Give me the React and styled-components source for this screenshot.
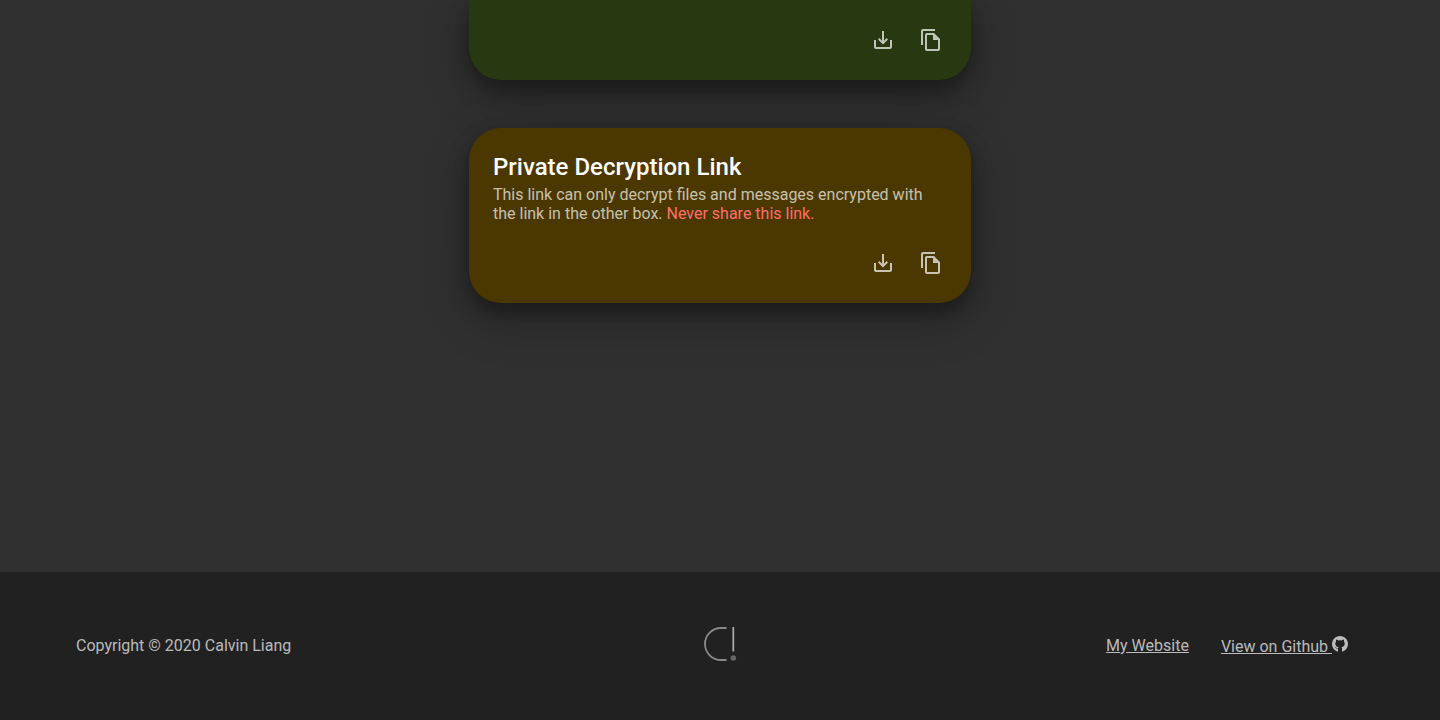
import React from "react";
import styled, { createGlobalStyle } from "styled-components";

const Global = createGlobalStyle`
  * { box-sizing: border-box; }
  body {
    margin: 0;
    background: #303030;
    color: rgba(255, 255, 255, 0.7);
    font-family: Roboto, sans-serif;
    font-size: 16px;
    line-height: 19px;
  }
`;

const Page = styled.div`
  display: flex;
  flex-direction: column;
  min-height: 100vh;
`;

const Main = styled.main`
  flex: 1;
  display: flex;
  flex-direction: column;
  align-items: center;
  gap: 48px;
  padding-bottom: 64px;
`;

const Card = styled.section`
  width: 100%;
  max-width: 502px;
  padding: 24px;
  border-radius: ${(p) => (p.$continued ? "0 0 32px 32px" : "32px")};
  background: ${(p) => p.$color};
  box-shadow: 0 10px 20px rgba(0, 0, 0, 0.36), 0 14px 50px 4px rgba(0, 0, 0, 0.18);
`;

const CardTitle = styled.h2`
  margin: 0 0 2px;
  color: #fff;
  font-size: 24px;
  font-weight: 500;
  line-height: 31px;
`;

const CardText = styled.p`
  margin: 0 0 24px;
`;

const Warning = styled.span`
  color: #ff6e6e;
`;

const Actions = styled.div`
  display: flex;
  justify-content: flex-end;
  gap: 16px;
`;

const IconButton = styled.button`
  display: flex;
  padding: 4px;
  border: 0;
  background: none;
  color: rgba(255, 255, 255, 0.7);
  cursor: pointer;
`;

const Footer = styled.footer`
  display: grid;
  grid-template-columns: 1fr auto 1fr;
  align-items: center;
  padding: 54px 76px 58px;
  background: #212121;
`;

const Copyright = styled.span`
  padding-top: 2px;
`;

const FooterLinks = styled.nav`
  display: flex;
  justify-content: flex-end;
  gap: 32px;
  padding: 4px 16px 0 0;
`;

const FooterLink = styled.a`
  color: inherit;
`;

const Logo = styled.svg`
  display: block;
`;

const DownloadIcon = () => (
  <svg width="24" height="24" viewBox="0 0 24 24" fill="currentColor" aria-hidden="true">
    <path d="M19 12v7H5v-7H3v7c0 1.100.9 2 2 2h14c1.100 0 2-.9 2-2v-7h-2zm-6 .67l2.590-2.580L17 11.500l-5 5-5-5 1.410-1.410L11 12.670V3h2v9.670z" />
  </svg>
);

const CopyIcon = () => (
  <svg width="24" height="24" viewBox="0 0 24 24" fill="currentColor" aria-hidden="true">
    <path d="M16 1H4c-1.100 0-2 .9-2 2v14h2V3h12V1zm-1 4H8c-1.100 0-1.990.9-1.990 2L6 21c0 1.100.89 2 1.990 2H19c1.100 0 2-.9 2-2V11l-6-6zM8 21V7h6v5h5v9H8z" />
  </svg>
);

const GithubIcon = () => (
  <svg width="16" height="16" viewBox="0 0 16 16" fill="currentColor" aria-hidden="true">
    <path d="M8 0a8 8 0 0 0-2.900 15.450c.5.190.9.050.9-.450v-2.200C4.900 13 4.300 12.800 3.900 12.100c-.3-.5-.6-.8-.9-1 .6-.1 1 .200 1.400.7.400.5.9.6 1.700.4.100-.4.300-.7.500-.9-2.200-.3-3.300-1.400-3.300-3.700 0-.9.300-1.600.8-2.100-.2-.6-.1-1.300.1-1.900.8 0 1.500.4 2.100.8a7 7 0 0 1 3.400 0c.6-.4 1.300-.8 2.100-.8.200.6.300 1.300.1 1.900.5.500.8 1.200.8 2.100 0 2.300-1.100 3.400-3.300 3.700.4.400.6.9.6 1.500V15c0 .5.400.640.9.450A8 8 0 0 0 8 0z" />
  </svg>
);

function CardActions({ name }) {
  return (
    <Actions>
      <IconButton type="button" aria-label={`Download ${name}`}><DownloadIcon /></IconButton>
      <IconButton type="button" aria-label={`Copy ${name}`}><CopyIcon /></IconButton>
    </Actions>
  );
}

export default function App() {
  return (
    <Page>
      <Global />
      <Main>
        <Card $color="#283912" $continued>
          <CardActions name="public link" />
        </Card>
        <Card $color="#4b3700">
          <CardTitle>Private Decryption Link</CardTitle>
          <CardText>
            This link can only decrypt files and messages encrypted with the link in the other box.{" "}
            <Warning>Never share this link.</Warning>
          </CardText>
          <CardActions name="private link" />
        </Card>
      </Main>
      <Footer>
        <Copyright>Copyright © 2020 Calvin Liang</Copyright>
        <Logo width="34" height="36" viewBox="0 0 34 36" aria-hidden="true">
          <path d="M23.500 2H18A16 16 0 0 0 18 34H23.500" fill="none" stroke="#8a8a8a" strokeWidth="1.800" />
          <path d="M30.300 1V25.500" stroke="#a8a8a8" strokeWidth="1.800" />
          <circle cx="30.300" cy="32" r="2.800" fill="#666" />
        </Logo>
        <FooterLinks>
          <FooterLink href="#website">My Website</FooterLink>
          <FooterLink href="#github">View on Github <GithubIcon /></FooterLink>
        </FooterLinks>
      </Footer>
    </Page>
  );
}
